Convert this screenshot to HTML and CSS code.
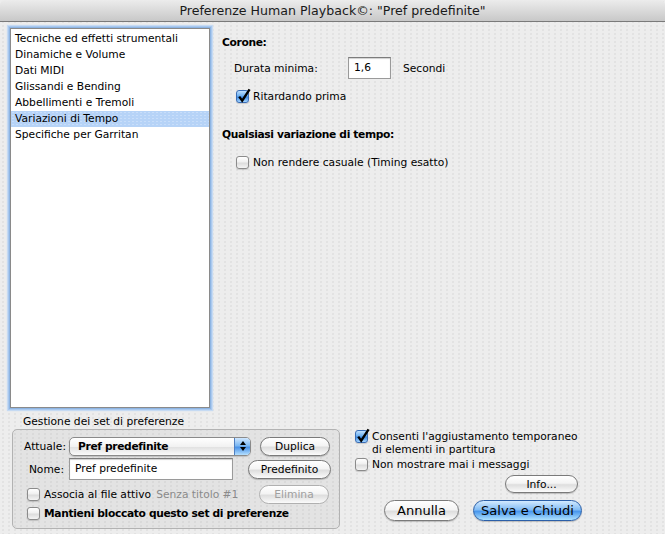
FILE: index.html
```html
<!DOCTYPE html>
<html>
<head>
<meta charset="utf-8">
<link rel="stylesheet" href="styles.css">
</head>
<body>
<div class="window">
  <div class="titlebar">Preferenze Human Playback©: "Pref predefinite"</div>
  <div class="top">
    <div class="list">
      <div class="item">Tecniche ed effetti strumentali</div>
      <div class="item">Dinamiche e Volume</div>
      <div class="item">Dati MIDI</div>
      <div class="item">Glissandi e Bending</div>
      <div class="item">Abbellimenti e Tremoli</div>
      <div class="item selected">Variazioni di Tempo</div>
      <div class="item">Specifiche per Garritan</div>
    </div>
    <div class="panel">
      <div class="heading h1">Corone:</div>
      <div class="durata">
        <span class="lbl">Durata minima:</span>
        <span class="field small">1,6</span>
        <span class="unit">Secondi</span>
      </div>
      <div class="check row-rit">
        <span class="box on"><svg viewBox="0 0 16 16" width="16" height="16"><path d="M3.2 8.6 L6.2 12.6 L13.6 1.4" fill="none" stroke="#000" stroke-width="2.4"/></svg></span>
        <span>Ritardando prima</span>
      </div>
      <div class="heading h2">Qualsiasi variazione di tempo:</div>
      <div class="check row-non">
        <span class="box"></span>
        <span>Non rendere casuale (Timing esatto)</span>
      </div>
    </div>
  </div>
  <div class="bottom">
    <div class="setblock">
      <div class="grouplabel">Gestione dei set di preferenze</div>
      <div class="group">
        <div class="grow r1">
          <span class="glbl l-att">Attuale:</span>
          <span class="popup"><span class="ptext">Pref predefinite</span><span class="parrows"><svg viewBox="0 0 8 12" width="8" height="12"><path d="M4 1 L7 5 L1 5 Z M4 11 L7 7 L1 7 Z" fill="#000"/></svg></span></span>
          <span class="btn b-dup">Duplica</span>
        </div>
        <div class="grow r2">
          <span class="glbl l-nome">Nome:</span>
          <span class="field name">Pref predefinite</span>
          <span class="btn b-pre">Predefinito</span>
        </div>
        <div class="grow r3">
          <span class="check">
            <span class="box"></span>
            <span>Associa al file attivo</span>
          </span>
          <span class="gray">Senza titolo #1</span>
          <span class="btn disabled b-eli">Elimina</span>
        </div>
        <div class="grow r4">
          <span class="check bold">
            <span class="box"></span>
            <span>Mantieni bloccato questo set di preferenze</span>
          </span>
        </div>
      </div>
    </div>
    <div class="side">
      <div class="check two">
        <span class="box on"><svg viewBox="0 0 16 16" width="16" height="16"><path d="M3.2 8.6 L6.2 12.6 L13.6 1.4" fill="none" stroke="#000" stroke-width="2.4"/></svg></span>
        <span class="twotext">Consenti l'aggiustamento temporaneo<br>di elementi in partitura</span>
      </div>
      <div class="check row-msg">
        <span class="box"></span>
        <span>Non mostrare mai i messaggi</span>
      </div>
      <div class="inforow"><span class="btn b-info">Info...</span></div>
      <div class="actions">
        <span class="btn big b-ann">Annulla</span>
        <span class="btn big blue b-sal">Salva e Chiudi</span>
      </div>
    </div>
  </div>
</div>
</body>
</html>
```
FILE: styles.css
```css
* { box-sizing: border-box; }
html, body { margin: 0; padding: 0; }
body {
  font-family: "DejaVu Sans", Verdana, sans-serif;
  font-size: 10.7px;
  color: #000;
  background: #ececec;
}
.window {
  width: 665px;
  height: 534px;
  overflow: hidden;
  background-color: #ededed;
  background-image: radial-gradient(circle, #dcdcdc 0.6px, transparent 0.9px);
  background-size: 6px 4px;
}
.titlebar {
  height: 22px;
  line-height: 21px;
  text-align: center;
  font-size: 12.6px;
  color: #1a1a1a;
  background: linear-gradient(#ececec, #dadada 50%, #c8c8c8);
  border-bottom: 1px solid #7a7a7a;
  border-radius: 5px 5px 0 0;
}
.top {
  display: flex;
  height: 386px;
  padding-top: 6px;
}
.list {
  margin-left: 10px;
  width: 200px;
  height: 380px;
  background: #fff;
  border: 1px solid #8a8a8a;
  box-shadow: 0 0 0 1px #8eb5e3, 0 0 0 2px #a9c8ee, 0 0 1px 3px #c5daf3;
  padding-top: 2px;
}
.item {
  height: 16px;
  line-height: 16px;
  padding-left: 4px;
  white-space: nowrap;
}
.item.selected {
  background-color: #b6d3f7;
  background-image: radial-gradient(circle, #c8defa 0.6px, transparent 0.9px);
  background-size: 4px 3px;
}
.panel {
  flex: 1;
  padding-left: 12px;
}
.heading {
  font-weight: bold;
  letter-spacing: -0.35px;
  height: 16px;
  line-height: 16px;
}
.h1 { margin-top: 7px; }
.durata {
  display: flex;
  align-items: center;
  margin-top: 6px;
  padding-left: 12px;
  height: 22px;
}
.durata .lbl { width: 114px; }
.field {
  display: inline-block;
  height: 22px;
  line-height: 20px;
  background: #fff;
  border: 1px solid #9a9a9a;
  border-top-color: #7c7c7c;
  box-shadow: inset 0 1px 1px #d0d0d0;
  padding-left: 5px;
}
.field.small { width: 43px; }
.unit { margin-left: 12px; }
.check {
  display: flex;
  align-items: center;
  gap: 4px;
  height: 14px;
}
.box {
  position: relative;
  display: inline-block;
  width: 13px;
  height: 13px;
  border: 1px solid #8b8b8b;
  border-radius: 3px;
  background: linear-gradient(#ffffff, #f0f0f0 45%, #dcdcdc 55%, #f4f4f4);
  box-shadow: 0 1px 1px rgba(0,0,0,0.15);
  flex: none;
}
.box.on {
  border-color: #3a6db5;
  background: linear-gradient(#bfe0ff, #6aaef0 45%, #3d8ae5 55%, #a6d6ff);
}
.box svg {
  position: absolute;
  left: -1px;
  top: -3px;
}
.row-rit { margin-top: 10px; padding-left: 14px; }
.h2 { margin-top: 24px; }
.row-non { margin-top: 12px; padding-left: 14px; }

.bottom {
  display: flex;
  height: 126px;
}
.setblock {
  margin-left: 12px;
  width: 328px;
}
.grouplabel {
  height: 15px;
  line-height: 15px;
  padding-left: 11px;
  margin-top: 6px;
}
.group {
  height: 100px;
  border: 1px solid #b2b2b2;
  border-radius: 5px;
  background: rgba(0,0,0,0.04);
  padding: 6px 0 0 0;
}
.grow {
  display: flex;
  align-items: center;
}
.r1 { height: 20px; }
.glbl { width: 56px; text-align: right; padding-right: 5px; }
.l-att { padding-right: 3px; }
.popup {
  display: flex;
  width: 182px;
  height: 19px;
  border: 1px solid #8a8a8a;
  border-radius: 5px;
  background: linear-gradient(#ffffff, #f2f2f2 50%, #e2e2e2 55%, #fafafa);
  box-shadow: 0 1px 1px rgba(0,0,0,0.15);
  overflow: hidden;
}
.ptext {
  flex: 1;
  font-weight: bold;
  letter-spacing: -0.35px;
  line-height: 17px;
  padding-left: 8px;
}
.parrows {
  width: 16px;
  display: flex;
  align-items: center;
  justify-content: center;
  border-left: 1px solid #4f7fc0;
  background: linear-gradient(#cfe7ff, #7ab7f3 45%, #4b93e8 55%, #b5e0ff);
}
.btn {
  display: inline-flex;
  align-items: center;
  justify-content: center;
  height: 19px;
  border: 1px solid #7a7a7a;
  border-radius: 10px;
  background: linear-gradient(#ffffff, #f4f4f4 45%, #dedede 55%, #fbfbfb);
  box-shadow: 0 1px 1px rgba(0,0,0,0.2);
  white-space: nowrap;
}
.b-dup { width: 70px; margin-left: 9px; }
.r2 { height: 22px; margin-top: 2px; }
.field.name { width: 164px; }
.b-pre { width: 83px; margin-left: 15px; }
.r3 { height: 19px; margin-top: 5px; padding-left: 14px; }
.gray { color: #8a8a8a; margin-left: 5px; }
.btn.disabled { color: #a0a0a0; border-color: #b0b0b0; box-shadow: none; }
.r3 .b-eli { width: 70px; margin-left: auto; margin-right: 10px; }
.r4 { height: 14px; margin-top: 2px; padding-left: 14px; }
.bold { font-weight: bold; letter-spacing: -0.35px; }

.side {
  margin-left: 15px;
  width: 310px;
  padding-top: 22px;
}
.check.two {
  align-items: flex-start;
  height: 26px;
}
.twotext { line-height: 13px; }
.row-msg { margin-top: 1px; }
.inforow { margin-top: 4px; padding-left: 150px; height: 18px; }
.b-info { width: 73px; height: 18px; }
.actions {
  display: flex;
  margin-top: 7px;
  padding-left: 29px;
  gap: 14px;
}
.btn.big { height: 21px; font-size: 13px; border-radius: 11px; }
.b-ann { width: 75px; }
.b-sal { width: 109px; }
.btn.blue {
  border-color: #2b5fa8;
  background: linear-gradient(#d3eaff, #84bdf5 45%, #4a97ec 55%, #aee2ff);
}
```
